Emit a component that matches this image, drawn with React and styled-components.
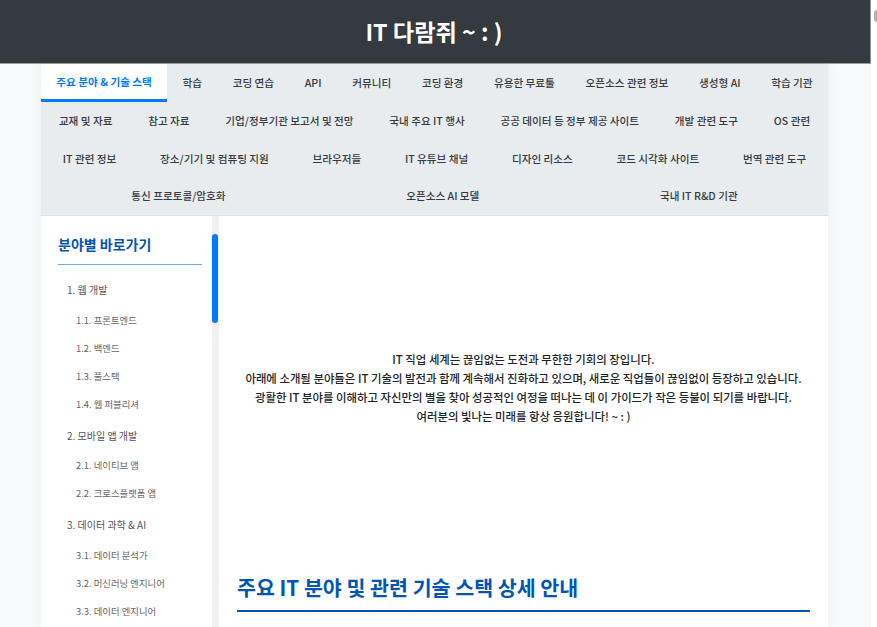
import React from "react";
import styled, { createGlobalStyle } from "styled-components";

const GlobalStyle = createGlobalStyle`
  html, body {
    margin: 0;
    padding: 0;
    height: 627px;
    overflow: hidden;
    background: #fff;
  }
  body {
    font-family: "Noto Sans CJK KR", "Noto Sans", sans-serif;
  }
`;

const Page = styled.div`
  position: relative;
  width: 877px;
  height: 627px;
  overflow: hidden;
  background: #fff;
`;

const Column = styled.div`
  width: 871px;
  height: 627px;
  overflow: hidden;
  background: #f8f9fa;
`;

const EdgeMark = styled.div`
  position: absolute;
  top: 10px;
  left: 874px;
  width: 6px;
  height: 12px;
  border-radius: 3px;
  background: #b4b4b4;
`;

const Header = styled.header`
  height: 64px;
  box-sizing: border-box;
  background: #343a40;
  border-bottom: 1px solid #9a9ea3;
  border-right: 1px solid #8d9196;
  padding-right: 2px;
  display: flex;
  align-items: center;
  justify-content: center;
`;

const Title = styled.h1`
  margin: 0;
  color: #fff;
  font-size: 23.2px;
  font-weight: 700;
  line-height: 1;
`;

const Wrapper = styled.div`
  width: 787px;
  margin-left: 41px;
  box-shadow: 0 0 10px rgba(0, 0, 0, 0.06);
`;

const Nav = styled.nav`
  background: #e9ecef;
  border-bottom: 1px solid #dee2e6;
`;

const NavRow = styled.div`
  height: 38px;
  display: flex;
  align-items: stretch;
  &:last-child {
    height: 37px;
  }
`;

const NavLink = styled.a`
  display: flex;
  align-items: center;
  justify-content: center;
  box-sizing: border-box;
  padding: 0 15px ${(p) => (p.$active ? "0" : "2px")};
  flex-grow: 1;
  font-size: 10.6px;
  white-space: nowrap;
  color: ${(p) => (p.$active ? "#007bff" : "#343a40")};
  background: ${(p) => (p.$active ? "#fff" : "transparent")};
  font-weight: ${(p) => (p.$active ? 700 : 500)};
  border-bottom: ${(p) => (p.$active ? "3px solid #007bff" : "none")};
`;

const Body = styled.div`
  display: flex;
  background: #fff;
  height: 411px;
  overflow: hidden;
`;

const Sidebar = styled.aside`
  width: 178px;
  flex-shrink: 0;
  position: relative;
  background: #fff;
  border-right: 1px solid #f0f0f0;
  box-sizing: border-box;
  padding: 17px 0 0 17px;
`;

const ScrollTrack = styled.div`
  position: absolute;
  top: 0;
  right: 0;
  width: 6px;
  height: 100%;
  background: #f1f1f1;
`;

const ScrollThumb = styled.div`
  position: absolute;
  top: 18px;
  right: 0;
  width: 6px;
  height: 89px;
  border-radius: 3px;
  background: #007bff;
`;

const SideTitle = styled.h3`
  margin: 0;
  width: 144px;
  box-sizing: border-box;
  height: 32px;
  color: #0056b3;
  font-size: 14px;
  line-height: 22px;
  font-weight: 700;
  border-bottom: 1px solid #6ea8e6;
`;

const SideList = styled.ul`
  list-style: none;
  margin: 0;
  padding: 11px 0 0 9px;
`;

const MainItem = styled.li`
  color: #555;
  font-size: 10px;
  line-height: 14px;
  white-space: nowrap;
  padding-bottom: 1.5px;
  margin-top: 18px;
  &:first-child {
    margin-top: 7px;
  }
`;

const SubItem = styled.li`
  color: #666;
  font-size: 9.4px;
  line-height: 14px;
  white-space: nowrap;
  padding-left: 9px;
  margin-top: 14px;
`;

const Content = styled.main`
  flex: 1;
  min-width: 0;
  padding: 0 18px;
`;

const Intro = styled.p`
  margin: 0;
  padding-top: 133.5px;
  height: 351px;
  box-sizing: border-box;
  text-align: center;
  color: #212529;
  font-size: 11.4px;
  line-height: 19.1px;
  font-weight: 500;
  white-space: nowrap;
`;

const SectionTitle = styled.h2`
  margin: 0;
  color: #0056b3;
  font-size: 20.6px;
  line-height: 30px;
  font-weight: 700;
  padding: 5px 0 8px;
  border-bottom: 2px solid #0056b3;
`;

const navRows = [
  ["주요 분야 & 기술 스택", "학습", "코딩 연습", "API", "커뮤니티", "코딩 환경", "유용한 무료툴", "오픈소스 관련 정보", "생성형 AI", "학습 기관"],
  ["교재 및 자료", "참고 자료", "기업/정부기관 보고서 및 전망", "국내 주요 IT 행사", "공공 데이터 등 정부 제공 사이트", "개발 관련 도구", "OS 관련"],
  ["IT 관련 정보", "장소/기기 및 컴퓨팅 지원", "브라우저들", "IT 유튜브 채널", "디자인 리소스", "코드 시각화 사이트", "번역 관련 도구"],
  ["통신 프로토콜/암호화", "오픈소스 AI 모델", "국내 IT R&D 기관"],
];

const sideItems = [
  { label: "1. 웹 개발" },
  { label: "1.1. 프론트엔드", sub: true },
  { label: "1.2. 백엔드", sub: true },
  { label: "1.3. 풀스택", sub: true },
  { label: "1.4. 웹 퍼블리셔", sub: true },
  { label: "2. 모바일 앱 개발" },
  { label: "2.1. 네이티브 앱", sub: true },
  { label: "2.2. 크로스플랫폼 앱", sub: true },
  { label: "3. 데이터 과학 & AI" },
  { label: "3.1. 데이터 분석가", sub: true },
  { label: "3.2. 머신러닝 엔지니어", sub: true },
  { label: "3.3. 데이터 엔지니어", sub: true },
];

export default function App() {
  return (
    <Page>
      <GlobalStyle />
      <Column>
        <Header>
          <Title>IT 다람쥐 ~ : )</Title>
        </Header>
        <Wrapper>
          <Nav>
            {navRows.map((row, i) => (
              <NavRow key={i}>
                {row.map((label) => (
                  <NavLink key={label} $active={label === "주요 분야 & 기술 스택"}>
                    {label}
                  </NavLink>
                ))}
              </NavRow>
            ))}
          </Nav>
          <Body>
            <Sidebar>
              <SideTitle>분야별 바로가기</SideTitle>
              <SideList>
                {sideItems.map(({ label, sub }) =>
                  sub ? <SubItem key={label}>{label}</SubItem> : <MainItem key={label}>{label}</MainItem>
                )}
              </SideList>
              <ScrollTrack />
              <ScrollThumb />
            </Sidebar>
            <Content>
              <Intro>
                IT 직업 세계는 끊임없는 도전과 무한한 기회의 장입니다.
                <br />
                아래에 소개될 분야들은 IT 기술의 발전과 함께 계속해서 진화하고 있으며, 새로운 직업들이 끊임없이 등장하고 있습니다.
                <br />
                광활한 IT 분야를 이해하고 자신만의 별을 찾아 성공적인 여정을 떠나는 데 이 가이드가 작은 등불이 되기를 바랍니다.
                <br />
                여러분의 빛나는 미래를 항상 응원합니다! ~ : )
              </Intro>
              <SectionTitle>주요 IT 분야 및 관련 기술 스택 상세 안내</SectionTitle>
            </Content>
          </Body>
        </Wrapper>
      </Column>
      <EdgeMark />
    </Page>
  );
}
